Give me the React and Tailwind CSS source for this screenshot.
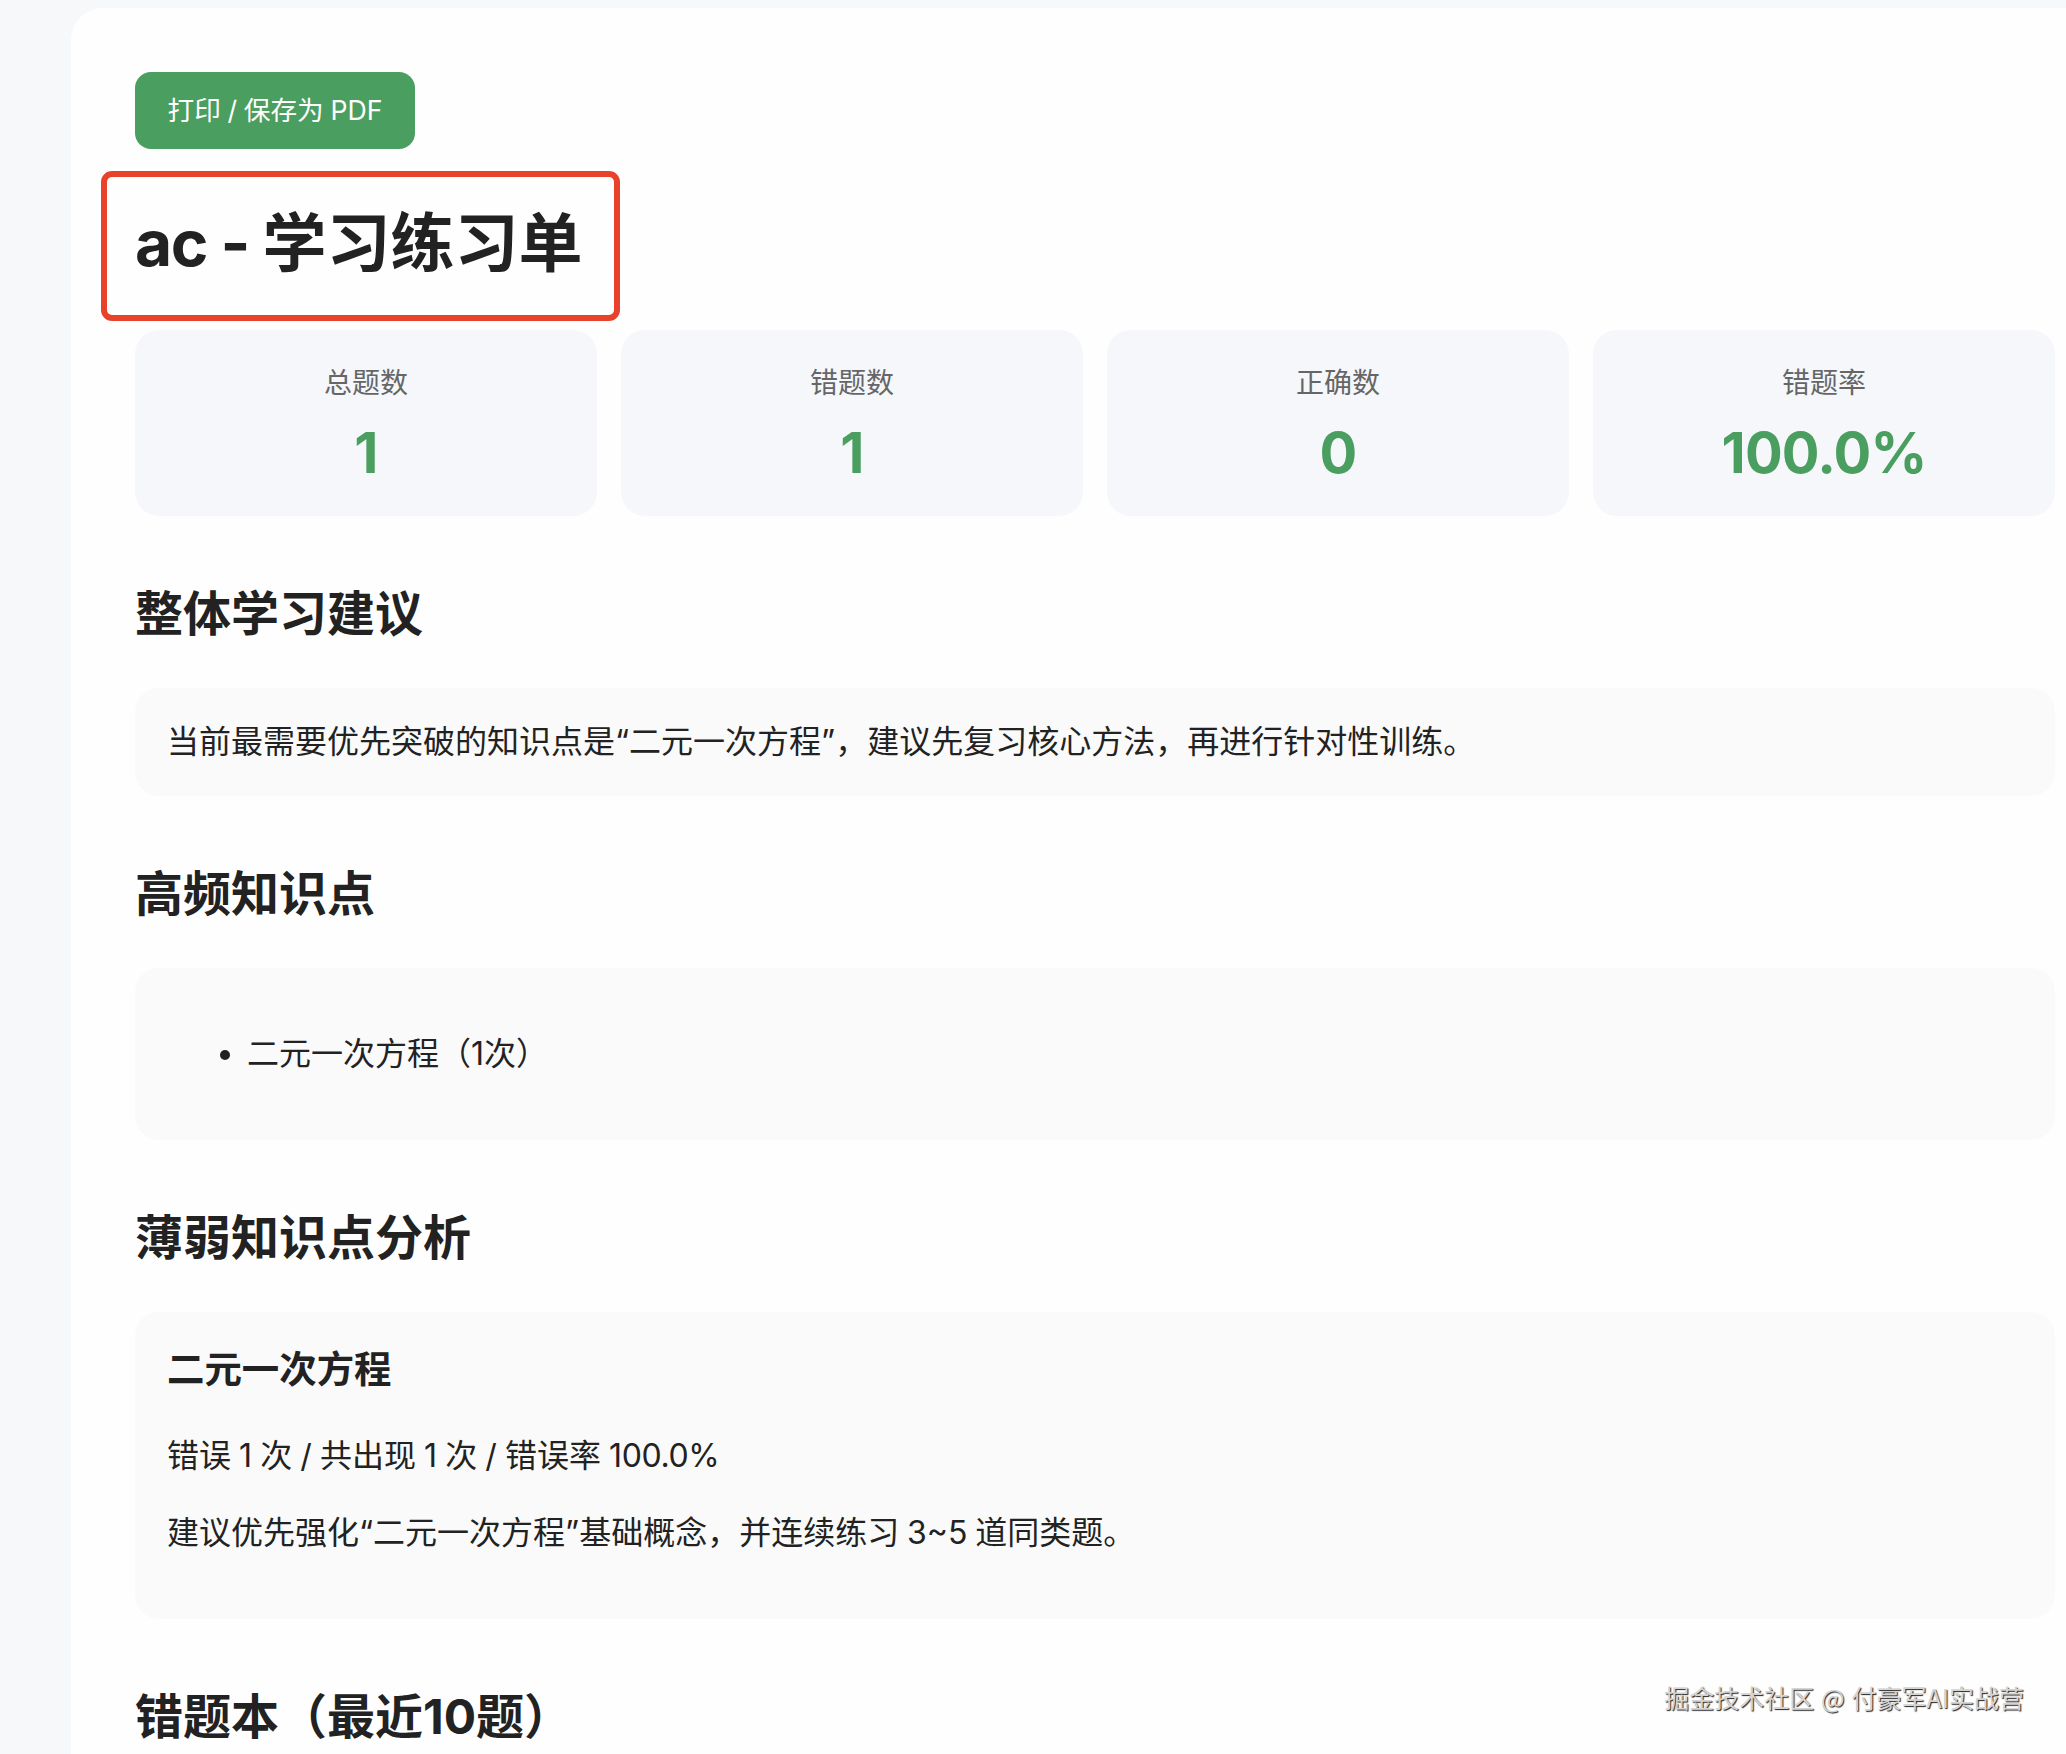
import React from "react";

const stats = [
  { label: "总题数", value: "1" },
  { label: "错题数", value: "1" },
  { label: "正确数", value: "0" },
  { label: "错题率", value: "100.0%" },
];

const frequentPoints = [{ name: "二元一次方程", count: 1 }];

const weakPoints = [
  {
    name: "二元一次方程",
    wrong: 1,
    total: 1,
    rate: "100.0%",
    advice: "建议优先强化“二元一次方程”基础概念，并连续练习 3~5 道同类题。",
  },
];

function StatCard({ label, value }) {
  return (
    <div className="flex h-[186px] flex-col items-center rounded-3xl bg-[#f5f7fa] pt-[33px]">
      <div className="text-[28px] leading-10 text-[#666666]">{label}</div>
      <div className="mt-4 text-[56px] leading-[68px] font-bold tracking-[-0.8px] text-[#4a9e5f]">
        {value}
      </div>
    </div>
  );
}

function Section({ title, children }) {
  return (
    <section className="mt-16">
      <h2 className="mb-[41px] text-[48px] leading-[67px] font-bold">{title}</h2>
      {children}
    </section>
  );
}

function Box({ children }) {
  return <div className="rounded-3xl bg-[#fafafa] p-8">{children}</div>;
}

function App() {
  return (
    <div
      lang="zh-CN"
      className="relative h-[1754px] w-[2066px] overflow-hidden bg-[#f6f8fa] pt-2 pl-[71px] font-['Inter','Noto_Sans_CJK_SC',sans-serif] text-[32px] leading-[44px] text-[#222222]"
    >
      <div className="min-h-[1900px] w-[2048px] rounded-[32px] bg-[#fefefe] p-16">
        <button
          type="button"
          className="flex h-[77px] w-[280px] items-center justify-center rounded-2xl bg-[#4a9e5f] pb-0.5 text-[26.67px] whitespace-nowrap text-white [word-spacing:-0.8px]"
        >
          打印 / 保存为 PDF
        </button>

        <div className="relative mt-[49px] mb-[42px] w-fit">
          <h1 className="text-[64px] leading-[90px] font-bold whitespace-nowrap">
            <span className="tracking-[-1.5px]">ac - </span>学习练习单
          </h1>
          <div className="absolute -top-[27px] -left-[34px] h-[150px] w-[519px] rounded-[11px] border-[6px] border-[#e8432a]" />
        </div>

        <div className="grid grid-cols-4 gap-6">
          {stats.map((s) => (
            <StatCard key={s.label} label={s.label} value={s.value} />
          ))}
        </div>

        <Section title="整体学习建议">
          <Box>
            <p>当前最需要优先突破的知识点是“二元一次方程”，建议先复习核心方法，再进行针对性训练。</p>
          </Box>
        </Section>

        <Section title="高频知识点">
          <Box>
            <ul className="my-8 list-disc pl-20">
              {frequentPoints.map((p) => (
                <li key={p.name}>
                  {p.name}（{p.count}次）
                </li>
              ))}
            </ul>
          </Box>
        </Section>

        <Section title="薄弱知识点分析">
          {weakPoints.map((p) => (
            <Box key={p.name}>
              <h3 className="mb-[38px] text-[37.44px] leading-[52px] font-bold">{p.name}</h3>
              <p className="mb-[33px] [word-spacing:-0.9px]">
                错误 {p.wrong} 次 / 共出现 {p.total} 次 / 错误率{" "}
                <span className="tracking-[-0.4px]">{p.rate}</span>
              </p>
              <p className="mb-[32px] [word-spacing:-1.2px]">{p.advice}</p>
            </Box>
          ))}
        </Section>

        <Section title="错题本（最近10题）" />
      </div>

      <div className="absolute top-[1679px] right-[42px] font-['Noto_Sans_CJK_SC',sans-serif] text-[25px] leading-9 whitespace-nowrap text-[#d4d4d4] [text-shadow:1px_1px_1px_#222222] [word-spacing:1.2px]">
        掘金技术社区 @ 付豪军AI实战营
      </div>
    </div>
  );
}

export default App;
